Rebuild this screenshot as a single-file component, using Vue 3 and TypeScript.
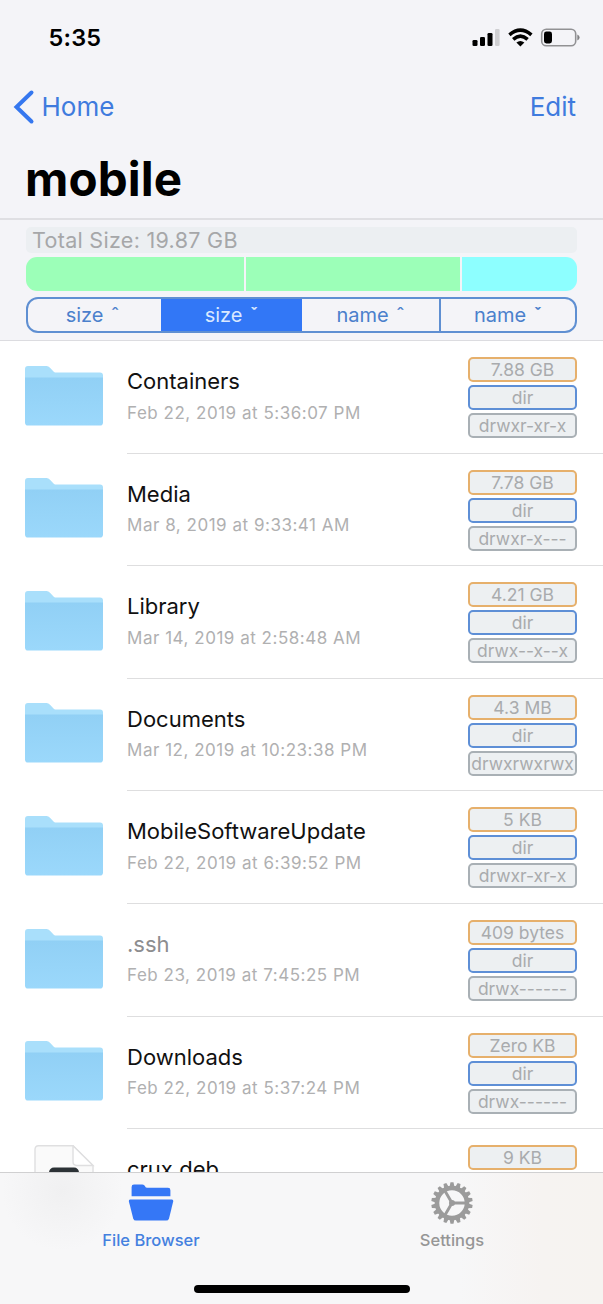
<script setup lang="ts">
interface FileEntry {
  name: string
  date: string
  size: string
  mode: string
  hidden?: boolean
}

const files: FileEntry[] = [
  { name: 'Containers', date: 'Feb 22, 2019 at 5:36:07 PM', size: '7.88 GB', mode: 'drwxr-xr-x' },
  { name: 'Media', date: 'Mar 8, 2019 at 9:33:41 AM', size: '7.78 GB', mode: 'drwxr-x---' },
  { name: 'Library', date: 'Mar 14, 2019 at 2:58:48 AM', size: '4.21 GB', mode: 'drwx--x--x' },
  { name: 'Documents', date: 'Mar 12, 2019 at 10:23:38 PM', size: '4.3 MB', mode: 'drwxrwxrwx' },
  { name: 'MobileSoftwareUpdate', date: 'Feb 22, 2019 at 6:39:52 PM', size: '5 KB', mode: 'drwxr-xr-x' },
  { name: '.ssh', date: 'Feb 23, 2019 at 7:45:25 PM', size: '409 bytes', mode: 'drwx------', hidden: true },
  { name: 'Downloads', date: 'Feb 22, 2019 at 5:37:24 PM', size: 'Zero KB', mode: 'drwx------' },
]

const sorts = [
  { label: 'size', mark: 'ˆ', active: false },
  { label: 'size', mark: 'ˇ', active: true },
  { label: 'name', mark: 'ˆ', active: false },
  { label: 'name', mark: 'ˇ', active: false },
]

const teeth = Array.from({ length: 18 }, (_, i) => i * 20)
</script>

<template>
  <div class="screen">
    <header class="header">
      <div class="status">
        <span class="time">5:35</span>
        <svg class="status-icons" width="108" height="22" viewBox="0 0 108 22">
          <g fill="#000">
            <rect x="0.5" y="13" width="5" height="6" rx="1.3" />
            <rect x="8" y="10" width="5" height="9" rx="1.3" />
            <rect x="15.5" y="6" width="5" height="13" rx="1.3" />
            <rect x="23" y="2" width="4.6" height="17" rx="1.3" fill="#cfcfd2" />
            <path d="M48.4 19.4 44.4 15.6Q48.4 12.4 52.4 15.6Z" />
          </g>
          <g fill="none" stroke="#000" stroke-width="3.6">
            <path d="M37.4 7.9Q48.4-1.5 59.4 7.9" />
            <path d="M41.2 12.3Q48.4 6 55.6 12.3" />
          </g>
          <rect x="69.7" y="2.2" width="34" height="16.6" rx="4.6" fill="none" stroke="#919194" stroke-width="1.6" />
          <rect x="72" y="4.5" width="8" height="12" rx="2.4" fill="#000" />
          <path d="M105.3 7.6Q107.6 8.5 107.6 10.5T105.3 13.4Z" fill="#818184" />
        </svg>
      </div>
      <nav class="nav">
        <a class="back">
          <svg width="22" height="36" viewBox="0 0 22 36">
            <path d="M18.5 3.5 3.5 18 18.5 32.5" fill="none" stroke="#3577ef" stroke-width="4" stroke-linecap="round" stroke-linejoin="miter" />
          </svg>
          <span class="back-label">Home</span>
        </a>
        <a class="edit">Edit</a>
      </nav>
      <h1 class="title">mobile</h1>
    </header>

    <section class="summary">
      <div class="total"><span>Total Size: 19.87 GB</span></div>
      <div class="usage">
        <i class="seg seg-a"></i>
        <i class="seg seg-b"></i>
        <i class="seg seg-c"></i>
      </div>
      <div class="sorts">
        <button v-for="(s, i) in sorts" :key="i" class="sort" :class="{ active: s.active }">
          {{ s.label }} {{ s.mark }}
        </button>
      </div>
    </section>

    <main class="list">
      <svg class="defs" width="0" height="0">
        <defs>
          <linearGradient id="folderBody" x1="0" y1="0" x2="0" y2="1">
            <stop offset="0" stop-color="#91d0f5" />
            <stop offset="1" stop-color="#9bd8fb" />
          </linearGradient>
        </defs>
      </svg>
      <article v-for="f in files" :key="f.name" class="row">
        <svg class="thumb" width="78" height="60" viewBox="0 0 78 60">
          <path d="M0 3Q0 0 3 0H21.5Q23.5 0 25 1.7L28.5 5.4Q29.6 6.6 32 6.6H75Q78 6.6 78 9.6V20H0Z" fill="#a9dffb" />
          <path d="M0 11.5H78V56.5Q78 59.6 75 59.6H3Q0 59.6 0 56.5Z" fill="url(#folderBody)" />
        </svg>
        <div class="body">
          <div class="text">
            <div class="name" :class="{ hidden: f.hidden }">{{ f.name }}</div>
            <div class="date">{{ f.date }}</div>
          </div>
          <div class="pills">
            <span class="pill size"><b>{{ f.size }}</b></span>
            <span class="pill kind"><b>dir</b></span>
            <span class="pill mode"><b>{{ f.mode }}</b></span>
          </div>
        </div>
      </article>
      <article class="row">
        <svg class="thumb page" width="78" height="60" viewBox="0 0 78 60">
          <path d="M10 60V4.5Q10 .7 13.5 .7H48L68 20.5V60" fill="#fafafa" stroke="#dfdfe0" stroke-width="1.4" />
          <path d="M48 .7V16.6Q48 20.5 52 20.5H68Z" fill="#fff" stroke="#dfdfe0" stroke-width="1.4" />
          <rect x="24" y="22.6" width="30" height="30" rx="5" fill="#2c3236" />
        </svg>
        <div class="body">
          <div class="text">
            <div class="name">crux.deb</div>
          </div>
          <div class="pills">
            <span class="pill size"><b>9 KB</b></span>
          </div>
        </div>
      </article>
    </main>

    <footer class="tabs">
      <div class="tab-row">
        <div class="tab selected">
          <svg class="tab-icon" width="46" height="42" viewBox="0 0 46 42">
            <path d="M3.6 14.2V5Q3.6 2.6 6 2.6H14.4Q16.4 2.6 17 4.2 17.6 5.8 19.4 5.8H40Q42.4 5.8 42.4 8.2V14.2Z" fill="#3577f6" />
            <path d="M2.2 17.4H43.8Q45.6 17.4 45.2 19.4L41 36.4Q40.4 38.6 38.2 38.6H8Q5.8 38.6 5.2 36.4L.9 19.4Q.4 17.4 2.2 17.4Z" fill="#3577f6" />
          </svg>
          <span class="tab-label">File Browser</span>
        </div>
        <div class="tab">
          <svg class="tab-icon" width="42" height="42" viewBox="-21 -21 42 42">
            <g fill="#9b9b9b">
              <path v-for="a in teeth" :key="a" d="M-2.6-15.5-1.5-20.7H1.5L2.6-15.5Z" :transform="`rotate(${a})`" />
            </g>
            <circle r="15" fill="none" stroke="#9b9b9b" stroke-width="4.6" />
            <path d="M0 0H14M0 0-7-12.1M0 0-7 12.1" fill="none" stroke="#9b9b9b" stroke-width="2.9" />
            <circle r="3" fill="#9b9b9b" />
          </svg>
          <span class="tab-label">Settings</span>
        </div>
      </div>
      <div class="home-bar"></div>
    </footer>
  </div>
</template>

<style>
html,
body {
  margin: 0;
  overflow: hidden;
}
</style>

<style scoped>
.screen {
  width: 603px;
  height: 1304px;
  display: flex;
  flex-direction: column;
  overflow: hidden;
  background: #fff;
  color: #000;
  font-family: Inter, "Liberation Sans", sans-serif;
  white-space: nowrap;
}
.header {
  flex: none;
  box-sizing: border-box;
  height: 220px;
  background: #f4f4f8;
  border-bottom: 2px solid #dfdfe3;
}
.status {
  height: 75px;
  display: flex;
  align-items: center;
  justify-content: space-between;
  padding: 0 23px 0 48.5px;
}
.time {
  font-size: 23.5px;
  font-weight: 600;
  letter-spacing: 0.2px;
}
.nav {
  height: 63px;
  display: flex;
  align-items: center;
  justify-content: space-between;
  padding: 0 27px 0 13px;
  font-size: 26px;
  color: #3f7bde;
}
.back {
  display: flex;
  align-items: center;
  gap: 6.5px;
}
.title {
  margin: 9px 0 0 25px;
  font-size: 47.5px;
  line-height: 63px;
  font-weight: 700;
  letter-spacing: 0.1px;
}
.summary {
  flex: none;
  box-sizing: border-box;
  height: 121px;
  padding: 7px 26px 0;
  background: #f4f4f8;
  border-bottom: 1px solid #dcdce0;
}
.total {
  height: 26px;
  line-height: 26px;
  padding-left: 6px;
  border-radius: 5px;
  background: #eceff2;
  color: #a6a7a9;
  font-size: 21.5px;
  letter-spacing: 0.3px;
}
.usage {
  height: 34px;
  margin-top: 4px;
  display: flex;
  gap: 1.5px;
  border-radius: 11px;
  overflow: hidden;
}
.seg {
  background: #9cffb8;
}
.seg-a {
  width: 218px;
}
.seg-b {
  width: 214.5px;
}
.seg-c {
  flex: 1;
  background: #8dffff;
}
.sorts {
  box-sizing: border-box;
  height: 36px;
  margin-top: 6px;
  display: grid;
  grid-template-columns: 133px 141px 137px 1fr;
  border: 2px solid #5f8fd2;
  border-radius: 12px;
  overflow: hidden;
}
.sort {
  padding: 0;
  border: 0;
  background: transparent;
  color: #4b80cc;
  font: 400 20px/32px Inter, "Liberation Sans", sans-serif;
  word-spacing: 2px;
}
.sort:first-child {
  padding-right: 4px;
}
.sort:last-child {
  border-left: 2px solid #5f8fd2;
}
.sort.active {
  background: #3277f6;
  color: #d9e8ff;
}
.list {
  flex: 1;
  min-height: 0;
  overflow: hidden;
}
.defs {
  display: block;
}
.row {
  height: 112.6px;
  display: flex;
  padding-left: 25px;
}
.thumb {
  flex: none;
  margin: 24.7px 24px 0 0;
}
.thumb.page {
  margin-top: 16px;
}
.body {
  flex: 1;
  box-sizing: border-box;
  display: flex;
  justify-content: space-between;
  padding: 16px 26px 0 0;
  border-bottom: 1px solid #dededf;
}
.name {
  margin-top: 9px;
  font-size: 22px;
  line-height: 30px;
  color: #111;
}
.name.hidden {
  color: #8d8d8f;
}
.date {
  margin-top: 4.5px;
  font-size: 17px;
  line-height: 25px;
  letter-spacing: 0.52px;
  color: #b0b0b1;
}
.pills {
  width: 109px;
  display: flex;
  flex-direction: column;
  gap: 3px;
}
.pill {
  box-sizing: border-box;
  height: 25px;
  border: 2px solid #e6b06c;
  border-radius: 5px;
  background: #edf0f2;
  color: #a9abad;
  font-size: 17.5px;
  line-height: 21px;
  text-align: center;
}
.pill b {
  margin: 0 -4px;
  font-weight: 400;
}
.kind {
  border-color: #5e8fd6;
}
.mode {
  border-color: #a9b0b5;
}
.tabs {
  flex: none;
  box-sizing: border-box;
  height: 132px;
  border-top: 1px solid #d0d0d1;
  background:
    radial-gradient(circle at 62px 18px, #f0f0f1 0, #f0f0f100 60px),
    linear-gradient(90deg, #f7f7f8 0, #f7f7f8 76%, #f6f3f1 90%, #f6f3f0 100%);
}
.tab-row {
  height: 112px;
  display: grid;
  grid-template-columns: 302px 300px;
}
.tab {
  display: flex;
  flex-direction: column;
  align-items: center;
  padding-top: 9px;
  color: #969696;
}
.selected {
  color: #4480df;
}
.tab-label {
  margin-top: 6px;
  font-size: 16.5px;
  font-weight: 500;
  line-height: 21px;
}
.home-bar {
  width: 216px;
  height: 8px;
  margin: 0 auto;
  border-radius: 4px;
  background: #000;
}
</style>
